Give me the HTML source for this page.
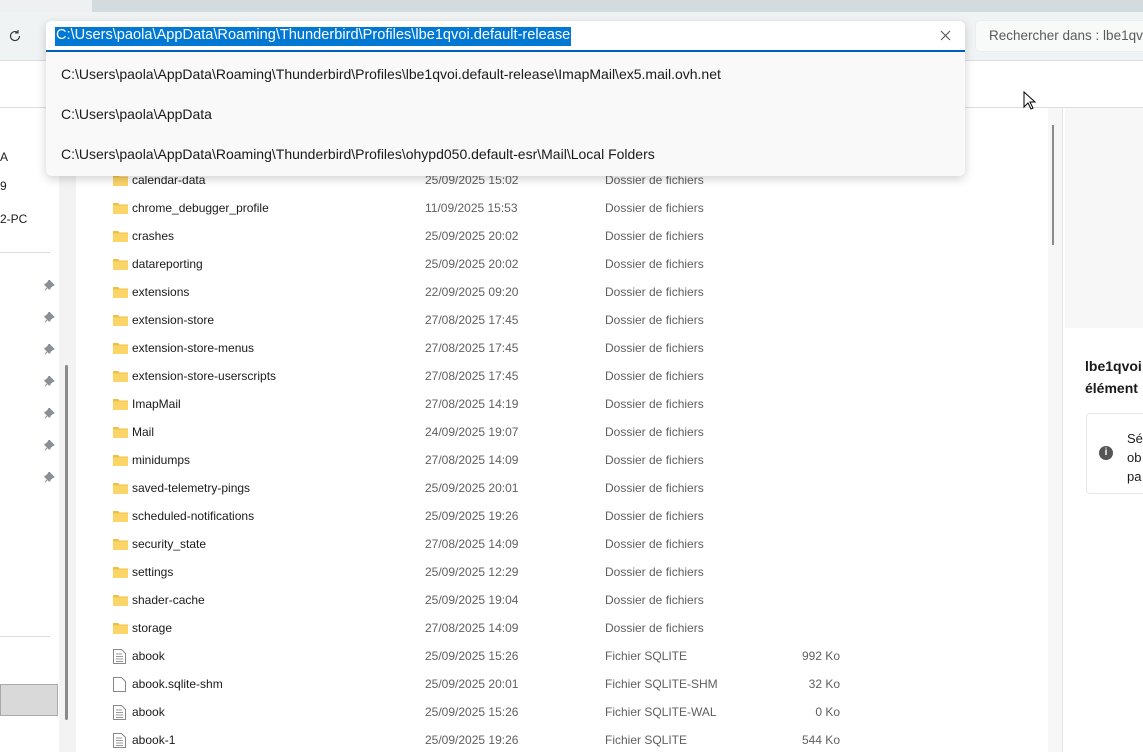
<!DOCTYPE html>
<html><head><meta charset="utf-8"><style>
*{margin:0;padding:0;box-sizing:border-box}
body{width:1143px;height:752px;overflow:hidden;position:relative;background:#fff;font-family:"Segoe UI","Liberation Sans",sans-serif;font-size:12px;color:#1a1a1a}
.abs{position:absolute}
.row{position:absolute;left:0;height:28px;width:900px}
.row .ic{position:absolute;left:113px;top:8px}
.row .n{position:absolute;left:132px;top:7px;color:#1a1a1a}
.row .d{position:absolute;left:425px;top:7px;color:#5f5f5f}
.row .t{position:absolute;left:605px;top:7px;color:#5f5f5f}
.row .s{position:absolute;right:60px;top:7px;color:#5f5f5f}
</style></head><body>
<div class="abs" style="left:0;top:0;width:1143px;height:12px;background:#d3dbde"></div>
<div class="abs" style="left:0;top:0;width:92px;height:12px;background:#eef0f1"></div>
<div class="abs" style="left:0;top:12px;width:1143px;height:48px;background:#f0f3f4"></div>
<svg class="abs" style="left:7px;top:28px" width="16" height="16" viewBox="0 0 16 16"><path d="M12.5 8a4.5 4.5 0 1 1-1.6-3.4M11 2v3h-3" fill="none" stroke="#333" stroke-width="1.1"/></svg>
<div class="abs" style="left:975px;top:20px;width:175px;height:32px;background:#f8fafa;border-radius:5px;border:1px solid #eceeee"></div>
<div class="abs" style="left:989px;top:28px;color:#5a5a5a;font-size:13.5px;white-space:nowrap">Rechercher dans : lbe1qvoi</div>
<div class="abs" style="left:0;top:60px;width:1143px;height:1px;background:#dcdcdc"></div>
<div class="abs" style="left:0;top:107px;width:1143px;height:1px;background:#dcdcdc"></div>
<div class="abs" style="left:59px;top:108px;width:17px;height:644px;background:#f3f3f3"></div>
<div class="abs" style="left:65px;top:365px;width:3px;height:355px;background:#8a8a8a;border-radius:2px"></div>
<div class="abs" style="left:0;top:150px">A</div>
<div class="abs" style="left:0;top:179px">9</div>
<div class="abs" style="left:0;top:212px">2-PC</div>
<div class="abs" style="left:0;top:252px;width:50px;height:1px;background:#ddd"></div>
<div class="abs" style="left:0;top:636px;width:50px;height:1px;background:#ddd"></div>
<div class="abs" style="left:0;top:684px;width:58px;height:32px;background:#d9d9d9;border:1px solid #aaa"></div>
<div class="abs" style="left:1048px;top:108px;width:14px;height:644px;background:#f7f7f7"></div>
<div class="abs" style="left:1052px;top:125px;width:2px;height:120px;background:#8a8a8a"></div>
<div class="abs" style="left:1062px;top:108px;width:1px;height:644px;background:#e5e5e5"></div>
<div class="abs" style="left:1065px;top:108px;width:78px;height:220px;background:#f7f7f7"></div>
<div class="abs" style="left:1085px;top:355px;font-weight:bold;font-size:14px;line-height:22px">lbe1qvoi<br>élément</div>
<div class="abs" style="left:1086px;top:413px;width:70px;height:81px;border:1px solid #e6e6e6;border-radius:4px"></div>
<div class="abs" style="left:1099px;top:446px;width:14px;height:14px;border-radius:7px;background:#555;color:#fff;font-size:10px;text-align:center;line-height:14px;font-weight:bold">i</div>
<div class="abs" style="left:1127px;top:429px;line-height:19px;font-size:13px">Sé<br>ob<br>pa</div>
<div id="rows"></div>
<div class="abs" style="left:46px;top:21px;width:919px;height:155px;border-radius:6px;background:#f9f9f9;box-shadow:0 3px 10px rgba(0,0,0,.18)"></div>
<div class="abs" style="left:46px;top:21px;width:919px;height:31px;background:#fff;border-radius:6px 6px 0 0;border-bottom:2px solid #005fb8"></div>
<div class="abs" style="left:55px;top:27px;width:516px;height:19px;background:#0078d4"></div>
<div class="abs" style="left:56px;top:27px;color:#fff;font-size:14.6px;white-space:nowrap">C:\Users\paola\AppData\Roaming\Thunderbird\Profiles\lbe1qvoi.default-release</div>
<svg class="abs" style="left:940px;top:30px" width="11" height="11" viewBox="0 0 11 11"><path d="M1 1l9 9M10 1l-9 9" stroke="#555" stroke-width="1.1"/></svg>
<div class="abs" style="left:61px;top:66px;font-size:14px;white-space:nowrap">C:\Users\paola\AppData\Roaming\Thunderbird\Profiles\lbe1qvoi.default-release\ImapMail\ex5.mail.ovh.net</div>
<div class="abs" style="left:61px;top:106px;font-size:14px">C:\Users\paola\AppData</div>
<div class="abs" style="left:61px;top:146px;font-size:14px;white-space:nowrap">C:\Users\paola\AppData\Roaming\Thunderbird\Profiles\ohypd050.default-esr\Mail\Local Folders</div>
<svg class="abs" style="left:1023px;top:91px" width="14" height="20" viewBox="0 0 14 20"><path d="M1 1v15l4-4 3 6 2-1-3-6h5z" fill="#fff" stroke="#000"/></svg>
<script>
const F=[["calendar-data","25/09/2025 15:02"],["chrome_debugger_profile","11/09/2025 15:53"],["crashes","25/09/2025 20:02"],["datareporting","25/09/2025 20:02"],["extensions","22/09/2025 09:20"],["extension-store","27/08/2025 17:45"],["extension-store-menus","27/08/2025 17:45"],["extension-store-userscripts","27/08/2025 17:45"],["ImapMail","27/08/2025 14:19"],["Mail","24/09/2025 19:07"],["minidumps","27/08/2025 14:09"],["saved-telemetry-pings","25/09/2025 20:01"],["scheduled-notifications","25/09/2025 19:26"],["security_state","27/08/2025 14:09"],["settings","25/09/2025 12:29"],["shader-cache","25/09/2025 19:04"],["storage","27/08/2025 14:09"]];
const G=[["abook","25/09/2025 15:26","Fichier SQLITE","992 Ko",1],["abook.sqlite-shm","25/09/2025 20:01","Fichier SQLITE-SHM","32 Ko",0],["abook","25/09/2025 15:26","Fichier SQLITE-WAL","0 Ko",1],["abook-1","25/09/2025 19:26","Fichier SQLITE","544 Ko",1]];
const folder='<svg class="ic" width="15" height="12" viewBox="0 0 15 12"><path d="M0 1h5l1.5 1.5H15V12H0z" fill="#f0c040"/><rect x="0" y="3.5" width="15" height="8.5" fill="#fcd569"/></svg>';
const file=l=>'<svg class="ic" style="top:7px" width="13" height="15" viewBox="0 0 13 15"><path d="M.5.5h8l4 4v10H.5z" fill="#fff" stroke="#888"/>'+(l?'<path d="M3 5h6M3 7.5h7M3 10h7M3 12.5h7" stroke="#999"/>':'')+'</svg>';
let h='',y=166;
F.forEach(f=>{h+=`<div class="row" style="top:${y}px">${folder}<span class="n">${f[0]}</span><span class="d">${f[1]}</span><span class="t">Dossier de fichiers</span></div>`;y+=28});
G.forEach(f=>{h+=`<div class="row" style="top:${y}px">${file(f[4])}<span class="n">${f[0]}</span><span class="d">${f[1]}</span><span class="t">${f[2]}</span><span class="s">${f[3]}</span></div>`;y+=28});
document.getElementById('rows').innerHTML=h;
let p='';[284,316,348,380,412,444,476].forEach(t=>p+=`<svg class="abs" style="left:44px;top:${t-4}px" width="11" height="11" viewBox="0 0 11 11"><path d="M6 1l4 4-2 1-2 2 0 1-1 0-4-4 0-1 1 0 2-2 1-2zM3 8l-2 2" fill="#8a9096" stroke="#8a9096"/></svg>`);
document.body.insertAdjacentHTML('beforeend',p);
</script>
</body></html>
